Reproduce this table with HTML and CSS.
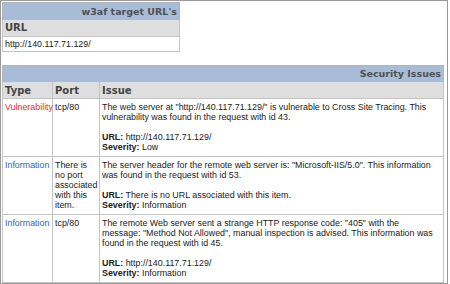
FILE: index.html
```html
<!DOCTYPE html>
<html>
<head>
<meta charset="utf-8">
<link rel="stylesheet" href="styles.css">
</head>
<body>
<div class="frame">
  <table class="tbl urls">
    <tr><th class="title">w3af target URL's</th></tr>
    <tr><th class="colhead">URL</th></tr>
    <tr><td class="cell">http://140.117.71.129/</td></tr>
  </table>

  <table class="tbl issues">
    <colgroup>
      <col class="c-type">
      <col class="c-port">
      <col class="c-issue">
    </colgroup>
    <tr><th class="title" colspan="3">Security Issues</th></tr>
    <tr>
      <th class="colhead">Type</th>
      <th class="colhead">Port</th>
      <th class="colhead">Issue</th>
    </tr>
    <tr>
      <td class="cell vuln">Vulnerability</td>
      <td class="cell">tcp/80</td>
      <td class="cell">The web server at "http://140.117.71.129/" is vulnerable to Cross Site Tracing. This vulnerability was found in the request with id 43.<br><br><b>URL:</b> http://140.117.71.129/<br><b>Severity:</b> Low</td>
    </tr>
    <tr>
      <td class="cell info">Information</td>
      <td class="cell">There is no port associated with this item.</td>
      <td class="cell">The server header for the remote web server is: "Microsoft-IIS/5.0". This information was found in the request with id 53.<br><br><b>URL:</b> There is no URL associated with this item.<br><b>Severity:</b> Information</td>
    </tr>
    <tr>
      <td class="cell info">Information</td>
      <td class="cell">tcp/80</td>
      <td class="cell">The remote Web server sent a strange HTTP response code: "405" with the<br>message: "Method Not Allowed", manual inspection is advised. This information was found in the request with id 45.<br><br><b>URL:</b> http://140.117.71.129/<br><b>Severity:</b> Information</td>
    </tr>
  </table>
</div>
</body>
</html>
```
FILE: styles.css
```css
html, body {
  margin: 0;
  padding: 0;
  background: #ffffff;
}

.frame {
  box-sizing: border-box;
  width: 448px;
  height: 284px;
  border: 1px solid #9a9a9a;
  padding: 1px;
  overflow: hidden;
  font-family: "Liberation Sans", Arial, sans-serif;
  font-size: 8.9px;
  color: #222222;
}

.tbl {
  border-collapse: collapse;
  border: 1px solid #b4b4b4;
}

.urls {
  width: 178px;
}

.issues {
  width: 442px;
  margin-top: 13px;
  table-layout: fixed;
}

.c-type { width: 50px; }
.c-port { width: 47px; }

.title {
  background: #a8bcd8;
  color: #505050;
  font-family: "DejaVu Sans", Verdana, sans-serif;
  font-weight: bold;
  font-size: 9.5px;
  text-align: right;
  height: 17px;
  padding: 0 2px;
  box-sizing: border-box;
}

.colhead {
  background: #dedede;
  color: #444444;
  font-family: "DejaVu Sans", Verdana, sans-serif;
  font-weight: bold;
  font-size: 10px;
  text-align: left;
  height: 16px;
  padding: 0 2px;
  border: 1px solid #c4c4c4;
  border-top: none;
}

.cell {
  vertical-align: top;
  text-align: left;
  line-height: 10px;
  padding: 3px 2px 4px 2px;
  border: 1px solid #c4c4c4;
}

.urls .cell {
  padding: 2px 2px 2px 2px;
}

.cell b {
  font-weight: bold;
}

.vuln { color: #e0332f; }
.info { color: #3a5fb5; }
```
